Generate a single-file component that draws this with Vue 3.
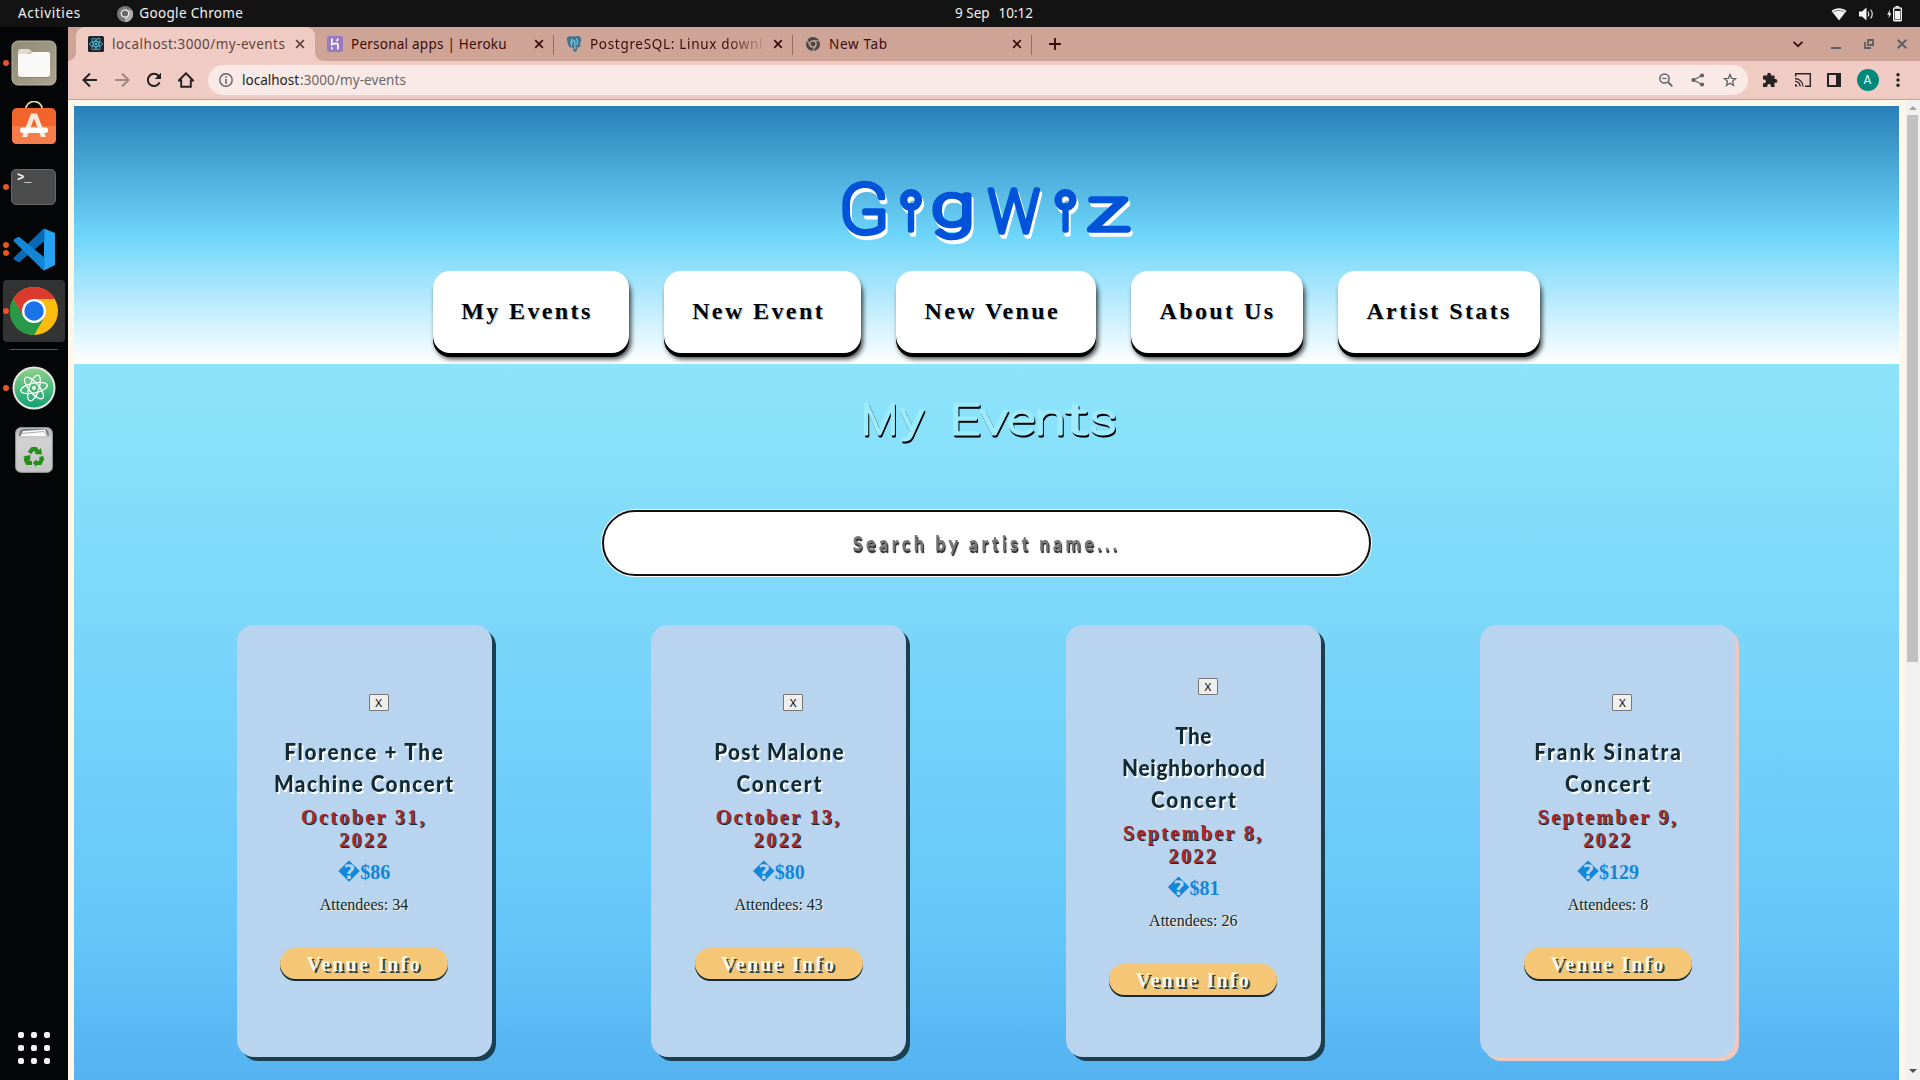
<script setup>
// Spreads the letters of a label so that it spans the given width in pixels.
const vFit = {
  mounted(el, { value }) {
    if (!value) return
    const n = el.textContent.length
    el.style.letterSpacing = '0px'
    const w = el.offsetWidth
    const gap = (value - w) / (n - 1)
    el.style.letterSpacing = gap + 'px'
    el.style.marginRight = -gap + 'px'
  },
}

const NARROW = 0.9

const tabs = [
  { icon: 'react', title: 'localhost:3000/my-events', width: 173, active: true },
  { icon: 'heroku', title: 'Personal apps | Heroku', width: 156 },
  { icon: 'postgres', title: 'PostgreSQL: Linux downl', width: 173, fade: true },
  { icon: 'chrome', title: 'New Tab', width: 58 },
]

// Letter, centre x, baseline y, font size, horizontal stretch
const logo = [
  ['G', 29, 58, 69, 1.05],
  ['i', 76, 55, 34, 1],
  ['g', 118, 50, 58, 1.35],
  ['W', 179, 57, 59, 0.95],
  ['i', 230.5, 55, 34, 1],
  ['z', 273, 55, 60, 1.45],
]
const heading = [
  ['M', 24.5, 39, 42, 1],
  ['y', 57, 37, 40, 1.2],
  ['E', 110, 39, 42, 1.25],
  ['v', 139, 39, 43, 1.3],
  ['e', 166, 39, 43, 1.25],
  ['n', 195, 39, 43, 1.3],
  ['t', 222, 39, 42, 1.7],
  ['s', 248, 39, 43, 1.25],
]

const nav = ['My Events\u00a0', 'New Event\u00a0', 'New Venue\u00a0', 'About Us', 'Artist Stats']

const events = [
  { title: [['Florence + The', 159], ['Machine Concert', 179]], date: ['October 31,', '2022'], price: 86, attendees: 34 },
  { title: [['Post Malone', 129], ['Concert', 85]], date: ['October 13,', '2022'], price: 80, attendees: 43 },
  { title: [['The', 36], ['Neighborhood', 143], ['Concert', 85]], date: ['September 8,', '2022'], price: 81, attendees: 26 },
  { title: [['Frank Sinatra', 147], ['Concert', 85]], date: ['September 9,', '2022'], price: 129, attendees: 8, today: true },
]
</script>

<template>
  <div class="desktop">
    <header class="topbar">
      <span class="activities" v-fit="62">Activities</span>
      <svg class="app-icon" width="16" height="16" viewBox="0 0 16 16"><circle cx="8" cy="8" r="8" fill="#777" /><path d="M8 8 16 8A8 8 0 0 1 8 16Z" fill="#bbb" /><path d="M8 4H15A8 8 0 0 1 8 16L11.5 10Z" fill="#aaa" /><circle cx="8" cy="7.5" r="3.7" fill="#666" stroke="#eee" stroke-width="1.3" /></svg>
      <span class="app-name" v-fit="104">Google Chrome</span>
      <div class="clock"><span v-fit="35">9 Sep</span><span v-fit="35">10:12</span></div>
      <div class="status">
        <svg width="16" height="14" viewBox="0 0 16 14"><path d="M8 13.4 .5 4C4.5.2 11.500.2 15.500 4Z" fill="#f2f2f2" /><path d="M2.300 5.200C5.500 2.800 10.500 2.800 13.700 5.200" fill="none" stroke="#777" stroke-width="1" /></svg>
        <svg width="16" height="14" viewBox="0 0 16 14"><path d="M0 4.500H3L7.500.5V13.500L3 9.500H0Z" fill="#f2f2f2" /><path d="M9 4.500Q10.700 7 9 9.500M11.500 2.500Q15 7 11.500 11.500" fill="none" stroke="#ddd" stroke-width="1.200" /></svg>
        <svg width="15" height="16" viewBox="0 0 15 16"><path d="M3 3.500.2 8.700H2L1.600 12.500 4.300 7.300H2.600Z" fill="#f2f2f2" /><path d="M8.500 0H12V1.500H8.500Z" fill="#f2f2f2" /><rect x="6.700" y="2" width="7.600" height="12.800" rx=".8" fill="none" stroke="#f2f2f2" stroke-width="1.400" /><path d="M8 5H13V13.500H8Z" fill="#f2f2f2" /></svg>
      </div>
    </header>

    <div class="below">
      <aside class="dock">
        <div class="slot files"><i class="run"></i>
          <svg width="46" height="46" viewBox="0 0 46 46"><defs><linearGradient id="fl" x2="1" y2="1"><stop stop-color="#8f8974" /><stop offset="1" stop-color="#aca48d" /></linearGradient></defs><rect x="1" y="1" width="44" height="44" rx="6" fill="url(#fl)" stroke="#bdb7a6" /><path d="M7 12q0-3 3-3h8l4 3.500h-3L7 20Z" fill="#e0dccc" /><path d="M7 16q0-2 2-2h9l4-2h15q2 0 2 2v20q0 3-3 3H10q-3 0-3-3Z" fill="#faf9f8" /><path d="M8 37.500H38" stroke="#79745f" opacity=".5" /></svg>
        </div>
        <div class="slot software">
          <svg width="46" height="44" viewBox="0 0 46 44"><path d="M15 9V7.500a8 7 0 0 1 16 0V9" fill="none" stroke="#f5d9a4" stroke-width="1.600" /><rect x="1" y="7" width="44" height="36" rx="5" fill="#f1652c" /><path d="M1 25H45V38q0 5-5 5H6q-5 0-5-5Z" fill="#f57e4a" /><path d="M20 12.500h6L35 36h-5L23 17.500 16 36h-5Z" fill="#fde8dc" /><rect x="9" y="26.500" width="28" height="5.500" rx="2.700" fill="#fff" /></svg>
        </div>
        <div class="slot terminal"><i class="run"></i>
          <div class="term"><span>&gt;_</span></div>
        </div>
        <div class="slot code"><i class="run"></i><i class="run"></i>
          <svg width="43" height="43" viewBox="0 0 43 43"><path d="M31 .5 42 5V37L31 42.500Z" fill="#25a3f2" /><path d="M1 29.500Q0 31 1.500 32L5 34Q6 34.500 7 33.500L31.500 13V.5Q30.500.5 29.500 1.500Z" fill="#0769b4" /><path d="M1 13.500Q0 12 1.500 11L5 9Q6 8.500 7 9.500L31.500 29.500V42.500Q30.500 42.500 29.500 41.500Z" fill="#1486d3" /></svg>
        </div>
        <div class="slot chrome active"><i class="run"></i>
          <svg width="48" height="48" viewBox="0 0 48 48"><circle cx="24" cy="24" r="24" fill="#fbbc0f" /><path d="M24 24 3.200 12A24 24 0 0 1 44.800 12H24Z" fill="#dc3a2e" /><path d="M3.200 12A24 24 0 0 0 24 48L34.400 30 24 24 13.600 30Z" fill="#289948" /><path d="M3.200 12 13.600 30 24 24 24 12Z" fill="#dc3a2e" /><path d="M3.200 12A24 24 0 0 0 24 48L34.400 30Q29 36 23 35.500 16 35 13.600 30Z" fill="#289948" /><circle cx="24" cy="24" r="12" fill="#fff" /><circle cx="24" cy="24" r="9.700" fill="#1a73e8" /></svg>
        </div>
        <div class="rule"></div>
        <div class="slot atom"><i class="run"></i>
          <svg width="44" height="44" viewBox="0 0 44 44"><defs><linearGradient id="at" x2="0" y2="1"><stop stop-color="#8fd48b" /><stop offset="1" stop-color="#0fa070" /></linearGradient></defs><circle cx="22" cy="22" r="20.500" fill="url(#at)" stroke="#e4e4e4" stroke-width="2" /><g fill="none" stroke="#fff" stroke-width="1.300"><ellipse cx="22" cy="22" rx="13.500" ry="5" transform="rotate(-12 22 22)" /><ellipse cx="22" cy="22" rx="13.500" ry="5" transform="rotate(50 22 22)" /><ellipse cx="22" cy="22" rx="13.500" ry="5" transform="rotate(108 22 22)" /></g><circle cx="22" cy="22" r="1.900" fill="#fff" /></svg>
        </div>
        <div class="slot trash">
          <svg width="38" height="46" viewBox="0 0 38 46"><defs><linearGradient id="tr" x2="0" y2="1"><stop stop-color="#b8b8b8" /><stop offset=".3" stop-color="#d2d2d2" /><stop offset="1" stop-color="#c4c4c4" /></linearGradient></defs><rect x=".7" y=".7" width="36.600" height="44.600" rx="5" fill="url(#tr)" stroke="#a4a4a4" /><path d="M4 9q0-7 5-7h20q5 0 5 7Z" fill="#777" /><path d="M5.500 9 8 4 30 2.500 32.500 9Z" fill="#fafafa" /><path d="M6.500 6.500 29 4.500 32 9" fill="none" stroke="#aaa" /><g fill="none" stroke="#258d19" stroke-width="4.200"><path d="M14.500 26 17.500 22H20.500L22.500 25" /><path d="M26 29.500 27 32 25 36H21" /><path d="M11.500 31 11 33 12.500 36H17" /></g><path d="M19.500 27 27 27.500 26 21ZM21.500 32V40L17.800 36ZM8 29.500 15.500 28 15 34Z" fill="#258d19" /></svg>
        </div>
        <div class="grid"><i v-for="n in 9" :key="n"></i></div>
      </aside>

      <div class="browser">
        <div class="tabstrip">
          <div v-for="t in tabs" :key="t.title" class="tab" :class="{ active: t.active }">
            <svg v-if="t.icon === 'react'" class="fav" viewBox="0 0 16 16"><rect width="16" height="16" rx="1.500" fill="#20232a" /><g fill="none" stroke="#53b9d4" stroke-width=".9"><ellipse cx="8" cy="8" rx="6.500" ry="2.500" /><ellipse cx="8" cy="8" rx="6.500" ry="2.500" transform="rotate(60 8 8)" /><ellipse cx="8" cy="8" rx="6.500" ry="2.500" transform="rotate(120 8 8)" /></g><circle cx="8" cy="8" r="1.300" fill="#53b9d4" /></svg>
            <svg v-else-if="t.icon === 'heroku'" class="fav" viewBox="0 0 16 16"><rect width="16" height="16" rx="2" fill="#9a79c4" /><path d="M4.800 2.500V8.500Q11 6 11 9V13.500M10.800 2.500Q10.800 4 9.800 5.300" fill="none" stroke="#fff" stroke-width="1.700" /><path d="M4 10.500 6.300 12.300 4 14Z" fill="#fff" /></svg>
            <svg v-else-if="t.icon === 'postgres'" class="fav" viewBox="0 0 16 17"><path d="M1 3Q1 .5 4 .7L6 1 9 .8 12 .5Q15.500.5 15.200 4 14.800 7.500 13 10L15 10.500Q13.500 12 11 11.500L10.800 15Q10 17 8 16L7.300 11.500Q6 12 5.500 11L4 12Q1.500 9 1 3Z" fill="#35799a" stroke="#385a6b" stroke-dasharray="1.300 .7" /><path d="M5.500 3Q4 7 5.500 10.500M10.500 2.500Q12.800 5 11 9.500M7 4.500Q9.500 4 9 7.500V14M6 5V8" fill="none" stroke="#b7dce8" stroke-width=".9" /></svg>
            <svg v-else class="fav small" viewBox="0 0 16 16"><circle cx="8" cy="8" r="8" fill="#474747" /><circle cx="8" cy="8" r="3.600" fill="#474747" stroke="#cea497" stroke-width="1.500" /><path d="M8 4.300H15M4.800 9.900 1.400 3.800M11.200 9.900 7.700 16" stroke="#cea497" stroke-width="1.300" /></svg>
            <div class="title" :class="{ fade: t.fade }"><span v-fit="t.width">{{ t.title }}</span></div>
            <svg class="close" width="10" height="10" viewBox="0 0 10 10"><path d="M1.200 1.200 8.800 8.800M8.800 1.200 1.200 8.800" stroke="currentColor" stroke-width="1.700" /></svg>
          </div>
          <svg class="plus" width="12" height="12" viewBox="0 0 12 12"><path d="M6 0V12M0 6H12" stroke="#3c0c0c" stroke-width="1.900" /></svg>
          <div class="window-controls">
            <svg width="10" height="7" viewBox="0 0 10 7"><path d="M.6.8 5 5.200 9.400.8" fill="none" stroke="#3c0c0c" stroke-width="1.700" /></svg>
            <svg width="10" height="10" viewBox="0 0 10 10"><path d="M0 9H10" stroke="#5c6064" stroke-width="2" /></svg>
            <svg width="10" height="10" viewBox="0 0 10 10"><path d="M4 1H9V6H4ZM1 3V9H7" fill="none" stroke="#5c6064" stroke-width="1.800" /></svg>
            <svg width="10" height="10" viewBox="0 0 10 10"><path d="M.7.7 9.300 9.300M9.300.7.7 9.300" stroke="#5c6064" stroke-width="2" /></svg>
          </div>
        </div>

        <div class="toolbar">
          <div class="actions">
            <svg viewBox="0 0 16 16"><path d="M15 8H2M8 1.500 1.500 8 8 14.500" fill="none" stroke="#222" stroke-width="2" /></svg>
            <svg viewBox="0 0 16 16"><path d="M1 8H14M8 1.500 14.500 8 8 14.500" fill="none" stroke="#a08783" stroke-width="2" /></svg>
            <svg viewBox="0 0 16 16"><path d="M13.600 10.300A6.100 6.100 0 1 1 12.600 4" fill="none" stroke="#222" stroke-width="2" /><path d="M15 .7V7H8.800Z" fill="#222" /></svg>
            <svg viewBox="0 0 16 16"><path d="M.8 8.500 8 1.300 15.200 8.500H12.800V14.700H3.200V8.500Z" fill="none" stroke="#222" stroke-width="1.900" /></svg>
          </div>
          <div class="omnibox">
            <svg width="14" height="14" viewBox="0 0 14 14"><circle cx="7" cy="7" r="6.200" fill="none" stroke="#5f6368" stroke-width="1.400" /><path d="M7 3.200V4.800M7 6V10.800" stroke="#5f6368" stroke-width="1.600" /></svg>
            <div class="url"><span class="host" v-fit="57">localhost</span><span v-fit="106">:3000/my-events</span></div>
            <div class="omni-icons">
              <svg width="14" height="14" viewBox="0 0 14 14"><circle cx="5.500" cy="5.500" r="4.600" fill="none" stroke="#5f6368" stroke-width="1.500" /><path d="M3.300 5.500H7.700" stroke="#5f6368" stroke-width="1.200" /><path d="M9 9 13.300 13.300" stroke="#5f6368" stroke-width="1.800" /></svg>
              <svg width="14" height="14" viewBox="0 0 14 14"><path d="M11 2.500 2.500 7 11 11.500" fill="none" stroke="#5f6368" stroke-width="1.300" /><g fill="#5f6368"><circle cx="11" cy="2.500" r="2.100" /><circle cx="2.500" cy="7" r="2.100" /><circle cx="11" cy="11.500" r="2.100" /></g></svg>
              <svg width="14" height="14" viewBox="0 0 14 14"><path d="M7 1.500 8.600 5.300 12.700 5.600 9.600 8.300 10.500 12.300 7 10.200 3.500 12.300 4.400 8.300 1.300 5.600 5.400 5.300Z" fill="none" stroke="#5f6368" stroke-width="1.300" /></svg>
            </div>
          </div>
          <div class="right-icons">
            <svg width="16" height="16" viewBox="0 0 16 16"><path d="M1.500 3.500H5.200V2.700a1.900 1.900 0 0 1 3.800 0V3.500H12.500V7h1a1.900 1.900 0 0 1 0 3.800h-1V15H8.900V13.800a1.800 1.800 0 0 0-3.600 0V15H1V11.200H2a1.900 1.900 0 0 0 0-3.800H1V4Z" fill="#282424" /></svg>
            <svg width="16" height="14" viewBox="0 0 16 14"><path d="M.7 3.500V.8H15.300V13.200H10" fill="none" stroke="#282424" stroke-width="1.400" /><path d="M0 5.500A8 8 0 0 1 8 13.500M0 8.300A5.200 5.200 0 0 1 5.200 13.500" fill="none" stroke="#282424" stroke-width="1.300" /><path d="M0 11A2.600 2.600 0 0 1 2.500 13.600H0Z" fill="#282424" /></svg>
            <svg width="14" height="14" viewBox="0 0 14 14"><rect x="1" y="1" width="12" height="12" fill="none" stroke="#222" stroke-width="2" /><path d="M9 1H13V13H9Z" fill="#222" /></svg>
            <div class="avatar">A</div>
            <svg width="4" height="14" viewBox="0 0 4 14"><g fill="#222"><circle cx="2" cy="1.800" r="1.700" /><circle cx="2" cy="7" r="1.700" /><circle cx="2" cy="12.200" r="1.700" /></g></svg>
          </div>
        </div>

        <div class="viewport">
          <div class="page">
            <div class="hero">
              <h1>
                <svg class="script logo" width="303" height="90" viewBox="0 0 303 90" aria-label="GigWiz">
                  <text v-for="([c, x, y, size, sx], k) in logo" :key="k" :transform="`translate(${x} ${y}) scale(${sx} 1)`" :font-size="size">{{ c }}</text>
                  <circle cx="76" cy="25" r="7.300" /><circle cx="230.500" cy="25" r="7.300" />
                </svg>
              </h1>
              <nav>
                <a v-for="n in nav" :key="n">{{ n }}</a>
              </nav>
            </div>
            <main>
              <h2>
                <svg class="script heading" width="263" height="56" viewBox="0 0 263 56" aria-label="My Events">
                  <text v-for="([c, x, y, size, sx], k) in heading" :key="k" :transform="`translate(${x} ${y}) scale(${sx} 1)`" :font-size="size">{{ c }}</text>
                </svg>
              </h2>
              <div class="search"><div class="narrow"><span v-fit="265 / NARROW">Search by artist name...</span></div></div>
              <div class="cards">
                <article v-for="e in events" :key="e.price" class="card" :class="{ today: e.today }">
                  <button class="remove">X</button>
                  <h3 class="narrow"><div v-for="[line, w] in e.title" :key="line"><span v-fit="w / NARROW">{{ line }}</span></div></h3>
                  <p class="date"><span v-for="d in e.date" :key="d">{{ d }}</span></p>
                  <p class="price">&#xFFFD;${{ e.price }}</p>
                  <p class="attendees">Attendees: {{ e.attendees }}</p>
                  <button class="venue">Venue Info</button>
                </article>
              </div>
            </main>
          </div>
          <div class="scrollbar">
            <svg width="8" height="4" viewBox="0 0 8 4"><path d="M0 4 4 0 8 4Z" fill="#a3a3a3" /></svg>
            <div class="thumb"></div>
            <svg class="down" width="8" height="4" viewBox="0 0 8 4"><path d="M0 0H8L4 4Z" fill="#505050" /></svg>
          </div>
        </div>
      </div>
    </div>
  </div>
</template>

<style>
body { margin: 0; overflow: hidden; }
</style>

<style scoped>
* { box-sizing: border-box; }
svg { display: block; flex: none; }
span { white-space: nowrap; }
.desktop { width: 1920px; height: 1080px; display: flex; flex-direction: column; overflow: hidden; font-family: "Noto Sans", sans-serif; }

.topbar { height: 27px; flex: none; background: #131313; color: #f2f2f2; display: flex; align-items: center; position: relative; font-size: 13.500px; line-height: 27px; padding-left: 18px; }
.app-icon { margin: 0 6px 0 37px; }
.clock { position: absolute; left: 955px; display: flex; gap: 9px; }
.status { margin-left: auto; margin-right: 18px; display: flex; align-items: center; gap: 12px; }

.below { flex: 1; display: flex; min-height: 0; }
.dock { width: 68px; flex: none; background: #040506; display: flex; flex-direction: column; align-items: center; }
.slot { position: relative; display: flex; justify-content: center; align-items: center; width: 62px; height: 62px; }
.run { position: absolute; left: 0; top: 28px; width: 6px; height: 6px; border-radius: 50%; background: #e95420; }
.files { margin-top: 5px; }
.software { padding-bottom: 5px; }
.terminal { padding: 0 1px 1px 0; }
.term { width: 45px; height: 36px; border-radius: 5px; background: #4b4b4b; border: 1px solid #686868; color: #fff; font: bold 12px/12px "Liberation Mono", monospace; padding: 2px 5px; }
.code .run { top: 24px; }
.code .run + .run { top: 32px; }
.active.chrome { background: #333; border-radius: 4px; }
.rule { width: 48px; height: 1px; background: #55595b; margin: 7px 0; }
.grid { margin-top: auto; margin-bottom: 16px; display: grid; grid-template-columns: repeat(3, 6px); gap: 7px; }
.grid i { width: 6px; height: 6px; border-radius: 2px; background: #f4f4f4; }

.browser { flex: 1; min-width: 0; display: flex; flex-direction: column; }
.tabstrip { height: 34px; flex: none; background: #cea497; display: flex; align-items: center; padding-left: 8px; color: #3c0c0c; }
.tab { position: relative; width: 239px; height: 34px; display: flex; align-items: center; padding: 0 10px 0 12px; font-size: 13.500px; }
.tab.active { background: #efcbc3; border-radius: 9px 9px 0 0; color: #61433f; }
.tab.active::before, .tab.active::after { content: ""; position: absolute; bottom: 0; width: 8px; height: 8px; }
.tab.active::before { left: -8px; background: radial-gradient(circle at 0 0, #cea497 7.500px, #efcbc3 8px); }
.tab.active::after { right: -8px; background: radial-gradient(circle at 100% 0, #cea497 7.500px, #efcbc3 8px); }
.tab:not(.active)::after { content: ""; position: absolute; right: 0; top: 8px; width: 1px; height: 20px; background: #98695f; }
.fav { width: 16px; height: 16px; margin-right: 8px; }
.fav.small { width: 14px; height: 14px; margin: 0 9px 0 1px; }
.title { flex: 1; min-width: 0; white-space: nowrap; margin-right: 10px; }
.title.fade { mask-image: linear-gradient(90deg, #000 135px, transparent 178px); }
.plus { margin-left: 17px; }
.window-controls { margin-left: auto; display: flex; align-items: center; gap: 23px; padding-right: 13px; }
.window-controls svg:first-child { margin-right: 5px; }

.toolbar { height: 39px; flex: none; background: #efcbc3; border-bottom: 1px solid #bfa59e; display: flex; align-items: center; padding: 0 20px 0 14px; }
.actions { display: flex; gap: 16px; }
.actions svg { width: 16px; height: 16px; }
.omnibox { width: 1540px; height: 30px; margin-left: 14px; border-radius: 15px; background: #f9eae8; display: flex; align-items: center; padding: 0 11px; font-size: 13.500px; color: #6b6667; }
.url { margin-left: 9px; display: flex; gap: 1px; }
.host { color: #222; }
.omni-icons { margin-left: auto; display: flex; gap: 18px; }
.right-icons { margin-left: 14px; flex: 1; display: flex; align-items: center; justify-content: space-between; }
.avatar { width: 22px; height: 22px; margin: 0 1px 0 -1px; border-radius: 50%; background: #00897b; color: #fff; font: 12px/22px Roboto, sans-serif; text-align: center; }

.viewport { flex: 1; min-height: 0; display: flex; background: #fff8ea; }
.page { width: 1825px; margin: 6px 6px 0 6px; display: flex; flex-direction: column; }
.hero { height: 258px; flex: none; background: linear-gradient(#2980b9, #6dd5fa 50%, #fff); overflow: hidden; }
h1, h2, h3, p { margin: 0; }
h1 { height: 165px; padding-top: 69px; display: flex; justify-content: center; }
.script { overflow: visible; font-family: Roboto, sans-serif; font-weight: 100; text-anchor: middle; stroke-linejoin: round; stroke-linecap: round; }
.logo { fill: #0053d8; stroke: #0053d8; stroke-width: 5.500px; filter: drop-shadow(2px 4px 0 #fff); }
.logo circle { fill: none; stroke-width: 7.500px; }
nav { display: flex; justify-content: center; gap: 35px; }
nav a { height: 82px; padding: 0 28px; border-radius: 17px; background: #fff; box-shadow: 0 4px 0 #000, 2px 6px 5px rgba(0, 0, 0, .75); font: bold 24px/81px "Liberation Serif", serif; letter-spacing: 2.400px; color: #000; text-shadow: 1px 1px 0 rgba(70, 130, 180, .45); white-space: nowrap; }
.narrow { transform: scaleX(.9); }

main { flex: 1; min-height: 0; background: linear-gradient(#8ee4fb, #7cd7f9 250px, #65c6fa 570px, #54b2f0 716px); display: flex; flex-direction: column; align-items: center; }
h2 { height: 146px; padding-top: 31px; }
.heading { fill: #9cecfd; stroke: #9cecfd; stroke-width: 3px; filter: drop-shadow(1px 2px 0 #000); }
.search { width: 769px; height: 66px; border-radius: 33px; border: 2px solid #111; background: #fff; box-shadow: 0 0 0 1px #fff; display: flex; justify-content: center; align-items: center; font: 900 20px/30px Lato, sans-serif; color: #757575; text-shadow: 1px 2px 1px #222; padding: 0 3px 0 0; }
.cards { margin-top: 49px; width: 1500px; display: flex; justify-content: space-between; padding-right: 1px; }
.card { width: 255px; height: 432px; border-radius: 17px; background: #b9d4ef; box-shadow: 4px 4px 0 #1a3f50; display: flex; flex-direction: column; align-items: center; justify-content: center; text-align: center; padding-bottom: 9px; color: #102a33; }
.card.today { box-shadow: 4px 4px 0 #efc9c0; }
.remove { width: 20px; height: 17px; margin: 0 0 24px 29px; padding: 0; border: 1px solid #767676; border-radius: 1px; background: #efefef; color: #000; font: 11.500px/14px "Noto Sans", sans-serif; }
h3 { font: 900 23px/32px Lato, sans-serif; text-shadow: 2px 2px 0 #fff; }
.date { margin-top: 7px; display: flex; flex-direction: column; font: bold 20px/23px "Liberation Serif", serif; letter-spacing: 2.400px; color: #a52a2a; text-shadow: 1px 1px 0 #102a33; }
.price { margin-top: 9px; font: bold 20px/23px "Liberation Serif", "DejaVu Sans", serif; color: #1087d9; }
.attendees { margin-top: 12px; font: 16px/18px "Liberation Serif", serif; text-shadow: 1px 1px 0 #f5ecd8; }
.venue { margin-top: 34px; width: 168px; height: 31px; padding: 0; border: 0; border-radius: 16px; background: #f5c676; box-shadow: 0 2px 0 #102a33; font: bold 20px/30px "Liberation Serif", serif; letter-spacing: 2.200px; color: #fff8e8; text-shadow: 2px 2px 0 #2c4347; }

.scrollbar { width: 15px; margin-left: auto; background: #f1f1f1; display: flex; flex-direction: column; align-items: center; padding: 6px 0 7px; }
.thumb { width: 11px; height: 547px; margin-top: 5px; background: #c1c1c1; }
.down { margin-top: auto; }
</style>
